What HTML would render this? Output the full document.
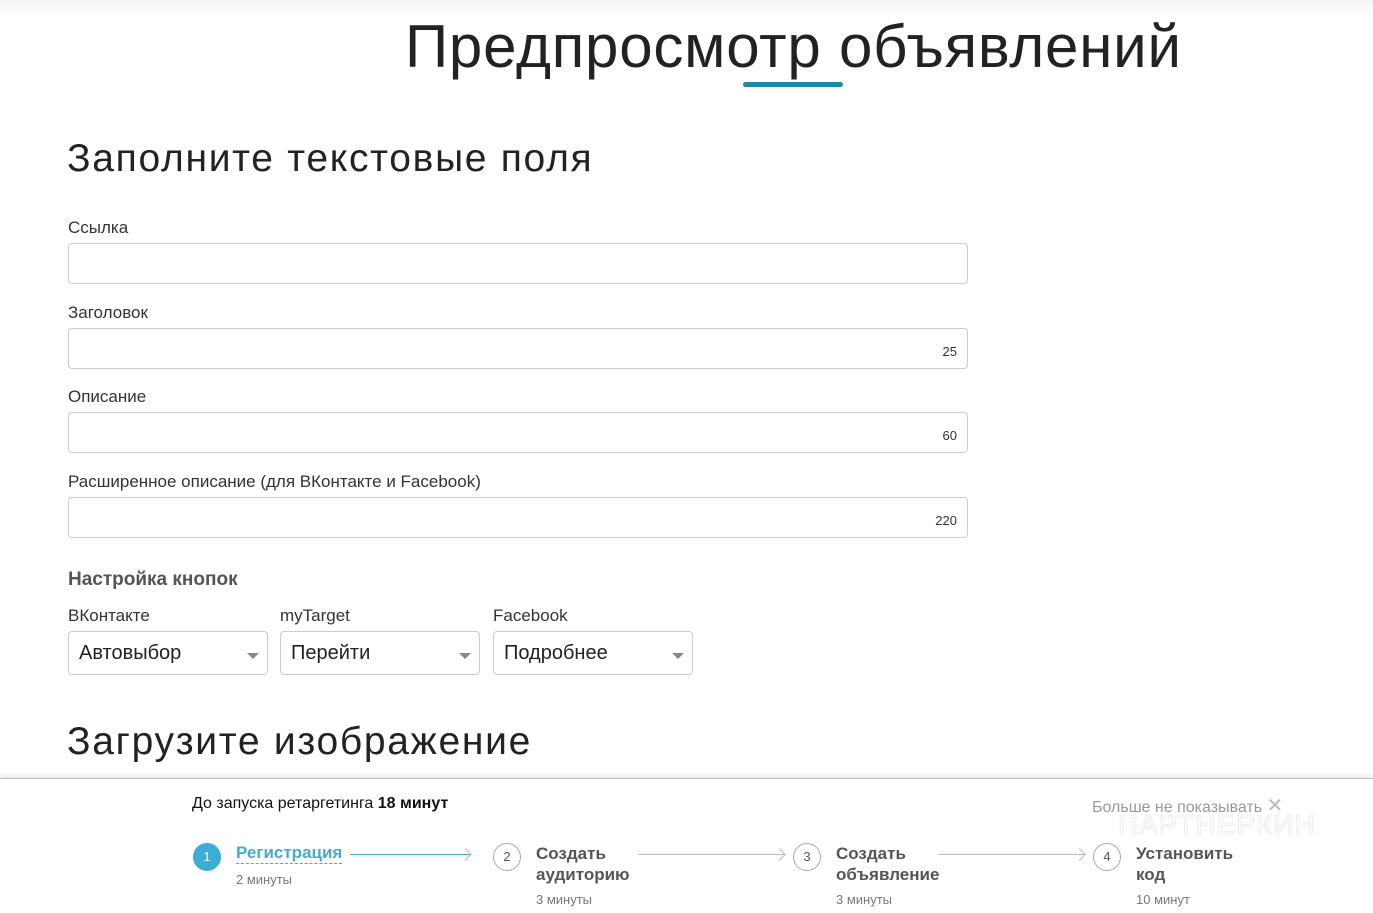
<!DOCTYPE html>
<html><head><meta charset="utf-8"><style>
*{margin:0;padding:0;box-sizing:border-box}
body{width:1373px;height:913px;overflow:hidden;background:#fff;font-family:"Liberation Sans",sans-serif;color:#222;position:relative}
.top{position:absolute;left:0;top:0;width:1373px;height:20px;background:linear-gradient(#f7f6f6,#fff)}
.abs{position:absolute;white-space:nowrap}
h1{position:absolute;left:405px;top:12px;font-size:60px;font-weight:normal;color:#222;letter-spacing:0.8px;white-space:nowrap}
.ul{position:absolute;left:743px;top:82px;width:100px;height:5px;border-radius:3px;background:#1a8aab}
h2{position:absolute;left:67px;font-size:39px;font-weight:normal;color:#222;white-space:nowrap;letter-spacing:1.7px}
.lbl{position:absolute;left:68px;font-size:17px;color:#333}
.inp{position:absolute;left:68px;width:900px;height:41px;border:1px solid #ccc;border-radius:4px;font-size:13px;text-align:right;padding:15px 10px 0 0;color:#333}
.sel{position:absolute;top:631px;height:44px;border:1px solid #ccc;border-radius:4px;font-size:20px;padding:10px 0 0 10px;color:#222}
.sel:after{content:"";position:absolute;right:8px;top:21px;border:6px solid transparent;border-top:6px solid #888;border-bottom:0}
.panel{position:absolute;left:0;top:778px;width:1373px;height:135px;background:#fff;border-top:1px solid #bbb;box-shadow:0 -3px 4px rgba(0,0,0,0.08)}
.circ{position:absolute;width:28px;height:28px;border-radius:50%;border:1px solid #aaa;font-size:13px;text-align:center;line-height:26px;color:#555}
.st{position:absolute;font-size:17px;font-weight:bold;color:#555;line-height:21px}
.tm{position:absolute;font-size:13px;color:#777}
.ln{position:absolute;height:1px;background:#bbb}
.ln:after{content:"";position:absolute;right:0;top:-4px;width:8px;height:8px;border-top:1px solid #bbb;border-right:1px solid #bbb;transform:rotate(45deg)}
</style></head><body>
<div class="top"></div>
<h1>Предпросмотр объявлений</h1>
<div class="ul"></div>
<h2 style="top:137px">Заполните текстовые поля</h2>
<div class="lbl" style="top:218px">Ссылка</div>
<div class="inp" style="top:243px"></div>
<div class="lbl" style="top:303px">Заголовок</div>
<div class="inp" style="top:328px">25</div>
<div class="lbl" style="top:387px">Описание</div>
<div class="inp" style="top:412px">60</div>
<div class="lbl" style="top:472px">Расширенное описание (для ВКонтакте и Facebook)</div>
<div class="inp" style="top:497px">220</div>
<div class="lbl" style="top:569px;font-size:19px;font-weight:bold;color:#555">Настройка кнопок</div>
<div class="lbl" style="top:606px">ВКонтакте</div>
<div class="lbl" style="top:606px;left:280px">myTarget</div>
<div class="lbl" style="top:606px;left:493px">Facebook</div>
<div class="sel" style="left:68px;width:200px">Автовыбор</div>
<div class="sel" style="left:280px;width:200px">Перейти</div>
<div class="sel" style="left:493px;width:200px">Подробнее</div>
<h2 style="top:720px">Загрузите изображение</h2>
<div class="panel">
<div class="abs" style="left:192px;top:16px;font-size:16px;color:#111">До запуска ретаргетинга <b>18 минут</b></div>
<div class="abs" style="left:1092px;top:14px;font-size:16px;color:#999">Больше не показывать <span style="font-size:20px;color:#bbb">✕</span></div>
<div class="abs" style="left:1118px;top:30px;font-size:28px;color:#fff;-webkit-text-stroke:1px #ececec;letter-spacing:1px">ПАРТНЕРКИН</div>
<div class="circ" style="left:193px;top:64px;background:#3aaed4;border-color:#3aaed4;color:#fff">1</div>
<div class="st" style="left:236px;top:64px;color:#4aaac8;border-bottom:1px dashed #4aaac8;line-height:20px">Регистрация</div>
<div class="ln" style="left:350px;top:75px;width:120px;background:#4aaac8"></div>
<div class="tm" style="left:236px;top:93px">2 минуты</div>
<div class="circ" style="left:493px;top:64px">2</div>
<div class="st" style="left:536px;top:64px">Создать<br>аудиторию</div>
<div class="ln" style="left:638px;top:75px;width:146px"></div>
<div class="tm" style="left:536px;top:113px">3 минуты</div>
<div class="circ" style="left:793px;top:64px">3</div>
<div class="st" style="left:836px;top:64px">Создать<br>объявление</div>
<div class="ln" style="left:938px;top:75px;width:146px"></div>
<div class="tm" style="left:836px;top:113px">3 минуты</div>
<div class="circ" style="left:1093px;top:64px">4</div>
<div class="st" style="left:1136px;top:64px">Установить<br>код</div>
<div class="tm" style="left:1136px;top:113px">10 минут</div>
</div>
</body></html>
